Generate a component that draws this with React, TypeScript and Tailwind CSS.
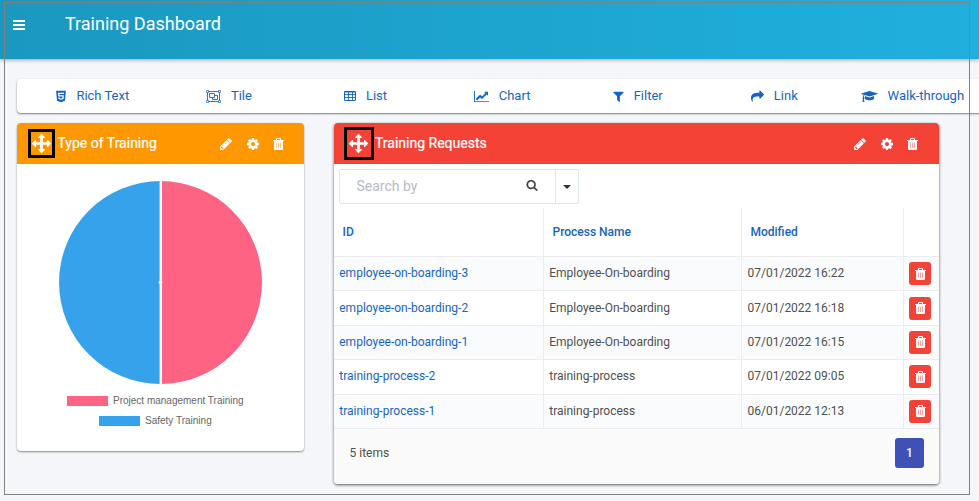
import React from 'react';
import { FaHtml5 } from 'react-icons/fa';

type IconProps = { className?: string };

const glyph = (d: string, w = 1792) => ({ className = '' }: IconProps) => (
  <svg viewBox={`0 0 ${w} 1792`} fill="currentColor" className={`shrink-0 ${className}`}>
    <path d={d} fillRule="evenodd" />
  </svg>
);

const Bars = glyph('M1664 1344v128q0 26-19 45t-45 19h-1408q-26 0-45-19t-19-45v-128q0-26 19-45t45-19h1408q26 0 45 19t19 45zm0-512v128q0 26-19 45t-45 19h-1408q-26 0-45-19t-19-45v-128q0-26 19-45t45-19h1408q26 0 45 19t19 45zm0-512v128q0 26-19 45t-45 19h-1408q-26 0-45-19t-19-45v-128q0-26 19-45t45-19h1408q26 0 45 19t19 45z');
const Pencil = glyph('M491 1536l91-91-235-235-91 91v107h128v128h107zm523-928q0-22-22-22-10 0-17 7l-542 542q-7 7-7 17 0 22 22 22 10 0 17-7l542-542q7-7 7-17zm-54-192l416 416-832 832h-416v-416zm683 96q0 53-37 90l-166 166-416-416 166-165q36-38 90-38 53 0 91 38l235 234q37 39 37 91z');
const Cog = glyph('M1152 896q0-106-75-181t-181-75-181 75-75 181 75 181 181 75 181-75 75-181zm512-109v222q0 12-8 23t-20 13l-185 28q-19 54-39 91 35 50 107 138 10 12 10 25t-9 23q-27 37-99 108t-94 71q-12 0-26-9l-138-108q-44 23-91 38-16 136-29 186-7 28-36 28h-222q-14 0-24.5-8.5t-11.5-21.5l-28-184q-49-16-90-37l-141 107q-10 9-25 9-14 0-25-11-126-114-165-168-7-10-7-23 0-12 8-23 15-21 51-66.5t54-70.5q-27-50-41-99l-183-27q-13-2-21-12.5t-8-23.5v-222q0-12 8-23t19-13l186-28q14-46 39-92-40-57-107-138-10-12-10-24 0-10 9-23 26-36 98.5-107.5t94.5-71.5q13 0 26 10l138 107q44-23 91-38 16-136 29-186 7-28 36-28h222q14 0 24.5 8.5t11.5 21.5l28 184q49 16 90 37l142-107q9-9 24-9 13 0 25 10 129 119 165 170 7 8 7 22 0 12-8 23-15 21-51 66.5t-54 70.5q26 50 41 98l183 28q13 2 21 12.5t8 23.5z');
const Arrows = glyph('M1792 896q0 26-19 45l-256 256q-19 19-45 19t-45-19-19-45v-128h-384v384h128q26 0 45 19t19 45-19 45l-256 256q-19 19-45 19t-45-19l-256-256q-19-19-19-45t19-45 45-19h128v-384h-384v128q0 26-19 45t-45 19-45-19l-256-256q-19-19-19-45t19-45l256-256q19-19 45-19t45 19 19 45v128h384v-384h-128q-26 0-45-19t-19-45 19-45l256-256q19-19 45-19t45 19l256 256q19 19 19 45t-19 45-45 19h-128v384h384v-128q0-26 19-45t45-19 45 19l256 256q19 19 19 45z');
const Search = glyph('M1216 832q0-185-131.5-316.5t-316.5-131.5-316.5 131.5-131.5 316.5 131.5 316.5 316.5 131.5 316.5-131.5 131.5-316.5zm512 832q0 52-38 90t-90 38q-54 0-90-38l-343-342q-179 124-399 124-143 0-273.5-55.5t-225-150-150-225-55.5-273.5 55.5-273.5 150-225 225-150 273.5-55.5 273.5 55.5 225 150 150 225 55.5 273.5q0 220-124 399l343 343q37 37 37 90z');
const Filter = glyph('M1595 295q17 41-14 70l-493 493v742q0 42-39 59-13 5-25 5-27 0-45-19l-256-256q-19-19-19-45v-486l-493-493q-31-29-14-70 17-39 59-39h1280q42 0 59 39z');
const Share = glyph('M1792 640q0 26-19 45l-512 512q-19 19-45 19t-45-19-19-45v-256h-224q-98 0-175.5 6t-154 21.5-133 42.5-105.5 69.5-80 101-48.5 138.5-17.5 181q0 55 5 123 0 6 2.5 23.5t2.5 26.5q0 15-8.5 25t-23.5 10q-16 0-28-17-7-9-13-22t-13.5-30-10.5-24q-127-285-127-451 0-199 53-333 162-403 875-403h224v-256q0-26 19-45t45-19 45 19l512 512q19 19 19 45z');
const LineChart = glyph('M2048 1536v128h-2048v-1536h128v1408h1920zm-128-1248v435q0 21-19.5 29.5t-35.5-7.5l-121-121-633 633q-10 10-23 10t-23-10l-233-233-416 416-192-192 585-585q10-10 23-10t23 10l233 233 464-464-121-121q-16-16-7.5-35.5t29.5-19.5h435q14 0 23 9t9 23z', 2048);
const GradCap = glyph('M1774 836l18 316q4 69-82 128t-235 93.5-323 34.5-323-34.5-235-93.5-82-128l18-316 574 181q22 7 48 7t48-7zm530-324q0 23-22 31l-1120 352q-4 1-10 1t-10-1l-652-206q-43 34-71 111.5t-34 178.5q63 36 63 109 0 69-58 107l58 433q2 14-8 25-9 11-24 11h-192q-15 0-24-11-10-11-8-25l58-433q-58-38-58-107 0-73 65-111 11-207 98-330l-333-104q-22-8-22-31t22-31l1120-352q4-1 10-1t10 1l1120 352q22 8 22 31z', 2304);

const Trash = ({ className = 'text-[#f44336]' }: IconProps) => (
  <svg viewBox="0 0 11 12" className={`h-[12px] w-[11px] shrink-0 ${className}`}>
    <path d="M3 2V1Q3 0 4 0H7Q8 0 8 1V2H11V3H10V10.5Q10 12 8.7 12H2.3Q1 12 1 10.5V3H0V2ZM4 2H7V1H4Z" fill="#fff" fillRule="evenodd" />
    <path d="M3.5 4.5V10M5.5 4.5V10M7.5 4.5V10" stroke="currentColor" strokeOpacity="0.5" strokeWidth="1" />
  </svg>
);

const TableIcon = ({ className = '' }: IconProps) => (
  <svg viewBox="0 0 12 11" fill="none" stroke="currentColor" className={`shrink-0 ${className}`}>
    <rect x="0.5" y="0.5" width="11" height="9" rx="0.5" />
    <path d="M0 1H12M0 3.5H12M0 6.5H12M4.5 0V10M8.5 0V10" strokeWidth="0.9" />
  </svg>
);

const ObjectGroup = ({ className = '' }: IconProps) => (
  <svg viewBox="0 0 15 13" fill="none" stroke="currentColor" className={`shrink-0 ${className}`}>
    <path d="M2.5 1.5H12.5M2.5 11.5H12.5M1.5 2.5V10.5M13.5 2.5V10.5" strokeWidth="0.9" />
    <path d="M.5 .5h2v2h-2zM12.5 .5h2v2h-2zM.5 10.5h2v2h-2zM12.5 10.5h2v2h-2z" strokeWidth="0.7" />
    <path d="M3.5 3.5h5v4h-5zM8.5 5.5h3v4h-5v-2" strokeWidth="0.9" />
  </svg>
);

const tools = [
  { label: 'Rich Text', icon: <FaHtml5 className="h-[13px] w-[12px]" />, gap: 'gap-[9px]' },
  { label: 'Tile', icon: <ObjectGroup className="h-[13px] w-[15px]" />, gap: 'gap-[10px]' },
  { label: 'List', icon: <TableIcon className="h-[11px] w-[12px]" />, gap: 'gap-[10px]' },
  { label: 'Chart', icon: <LineChart className="h-[13px] w-[15px]" />, gap: 'gap-[10px]' },
  { label: 'Filter', icon: <Filter className="-ml-[3px] h-[13px] w-[13px]" />, gap: 'gap-[9px]' },
  { label: 'Link', icon: <Share className="-ml-[2px] h-[13px] w-[13px]" />, gap: 'gap-[10px]' },
  { label: 'Walk-through', icon: <GradCap className="ml-px h-[13px] w-[17px]" />, gap: 'gap-[10px]' },
];

const rows = [
  ['employee-on-boarding-3', 'Employee-On-boarding', '07/01/2022 16:22'],
  ['employee-on-boarding-2', 'Employee-On-boarding', '07/01/2022 16:18'],
  ['employee-on-boarding-1', 'Employee-On-boarding', '07/01/2022 16:15'],
  ['training-process-2', 'training-process', '07/01/2022 09:05'],
  ['training-process-1', 'training-process', '06/01/2022 12:13'],
];

const Actions = ({ className = '' }: IconProps) => (
  <div className="mt-px flex items-center gap-[13px]">
    <Pencil className="size-[14px]" />
    <Cog className="size-[14px]" />
    <Trash className={className} />
  </div>
);

function PieCard() {
  return (
    <section className="flex h-[328px] w-[287px] flex-col overflow-hidden rounded bg-white shadow-[0_1px_2px_rgba(0,0,0,0.45)]">
      <header className="flex h-[41px] shrink-0 items-center bg-[#ff9800] pr-[20px] pl-[11px] text-white">
        <div className="flex h-[29px] w-[27px] items-center justify-center border-[3px] border-black">
          <Arrows className="size-[19px]" />
        </div>
        <h2 className="ml-[2.5px] flex-1 text-[14px] [-webkit-text-stroke:0.2px_white]">Type of Training</h2>
        <Actions className="text-[#ff9800]" />
      </header>
      <svg viewBox="0 0 206 206" className="mt-[15px] ml-[40px] size-[206px] shrink-0">
        <path d="M103.5 2A101.5 101.5 0 0 1 103.5 205Z" fill="#ff6384" />
        <path d="M103.5 2A101.5 101.5 0 0 0 103.5 205Z" fill="#36a2eb" />
        <path d="M103.8 0V206" stroke="#fff" strokeWidth="2.4" />
        <circle cx="103.5" cy="103.5" r="1.7" fill="#fff" stroke="#ddd" strokeWidth="0.5" />
      </svg>
      <div className="mt-[10px] flex flex-col gap-[8px] pl-[50px] font-['Liberation_Sans',sans-serif] text-[10px] leading-[12px] text-[#666]">
        <div className="flex items-center gap-[5px]">
          <span className="h-[10px] w-[41px] bg-[#ff6384]" />
          Project management Training
        </div>
        <div className="ml-[32px] flex items-center gap-[5px]">
          <span className="h-[10px] w-[41px] bg-[#36a2eb]" />
          Safety Training
        </div>
      </div>
    </section>
  );
}

function RequestsCard() {
  return (
    <section className="flex h-[361px] w-[605px] flex-col overflow-hidden rounded bg-white shadow-[0_1px_3px_rgba(0,0,0,0.65)]">
      <header className="flex h-[41px] shrink-0 items-center bg-[#f44336] pr-[21px] pl-[10px] text-white">
        <div className="flex h-[33px] w-[30px] items-center justify-center border-[3px] border-black">
          <Arrows className="mr-px size-[19px]" />
        </div>
        <h2 className="ml-px flex-1 text-[14px] [-webkit-text-stroke:0.2px_white]">Training Requests</h2>
        <Actions className="text-[#f44336]" />
      </header>
      <div className="mt-[5px] ml-[5px] flex h-[35px] w-[240px] shrink-0 rounded-[2px] border border-[#dee5e9]">
        <div className="flex flex-1 items-center justify-between pr-[17px] pl-[16.5px]">
          <span className="text-[14px] text-[#b6bac6]">Search by</span>
          <Search className="mb-[3px] size-[12px] text-[#444]" />
        </div>
        <div className="flex w-[23px] items-center justify-center border-l border-[#dee5e9]">
          <span className="border-x-4 border-t-4 border-x-transparent border-t-[#333]" />
        </div>
      </div>
      <div className="mt-[4px] grid h-[49px] shrink-0 grid-cols-[210px_198px_162px_35px] border-b border-[#ececec] text-[12px] font-medium text-[#1565c0]">
        <div className="flex items-center border-r border-[#ececec] pl-[8.5px]">ID</div>
        <div className="flex items-center border-r border-[#ececec] pl-[8.5px]">Process Name</div>
        <div className="flex items-center border-r border-[#ececec] pl-[8.5px]">Modified</div>
        <div />
      </div>
      {rows.map(([id, name, date]) => (
        <div key={id} className="grid h-[34.4px] shrink-0 grid-cols-[210px_198px_162px_35px] border-b border-[#ececec] text-[12px] text-[#4f4f4f] even:bg-[#fafbfd]">
          <div className="flex items-center border-r border-[#ececec] pb-px pl-[5.25px] text-[#1565c0]">{id}</div>
          <div className="flex items-center border-r border-[#ececec] pb-px pl-[5.25px]">{name}</div>
          <div className="flex items-center border-r border-[#ececec] pb-px pl-[5.5px]">{date}</div>
          <div className="flex items-center pl-[5px]">
            <span className="flex h-[23px] w-[22px] items-center justify-center rounded-[3px] bg-[#f44336]">
              <Trash />
            </span>
          </div>
        </div>
      ))}
      <footer className="flex flex-1 items-center justify-between bg-[#fafafa] pr-[15px] pb-[6px] pl-[15.5px] text-[12px] text-[#4f4f4f]">
        <span className="-mt-px">5 items</span>
        <span className="flex h-[30px] w-[29px] items-center justify-center rounded-[3px] bg-[#3f51b5] font-medium text-white">1</span>
      </footer>
    </section>
  );
}

export default function App() {
  return (
    <div className="relative h-[501px] w-[979px] overflow-hidden bg-[#f5f6fa] font-['Roboto',sans-serif]">
      <header className="flex h-[59px] items-start bg-linear-to-r from-[#1a98c0] to-[#20b0de] pt-[11px] pl-[12px] text-white shadow-[0_1px_4px_rgba(0,0,0,0.35)]">
        <Bars className="mt-[7px] size-[14px]" />
        <h1 className="ml-[39px] text-[18px] leading-[26px]">Training Dashboard</h1>
      </header>
      <nav className="mt-[20px] ml-[17px] grid h-[34px] w-[972px] grid-cols-[repeat(7,136.6px)] rounded bg-white pl-[7px] text-[13px] text-[#1565c0] shadow-[0_1px_2px_rgba(0,0,0,0.5)]">
        {tools.map((t) => (
          <a key={t.label} className={`flex items-center justify-center ${t.gap}`}>
            {t.icon}
            {t.label}
          </a>
        ))}
      </nav>
      <main className="mt-[10px] ml-[17px] flex items-start gap-[30px]">
        <PieCard />
        <RequestsCard />
      </main>
      <div className="pointer-events-none absolute top-[2px] left-[4px] h-[493px] w-[966px] border border-[#808080]" />
    </div>
  );
}
